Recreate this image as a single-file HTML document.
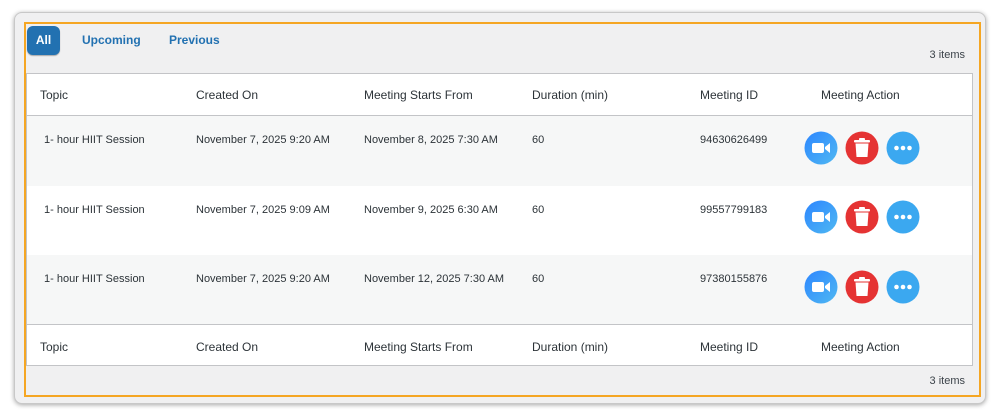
<!DOCTYPE html>
<html><head><style>
*{margin:0;padding:0;box-sizing:border-box}
body{width:1000px;height:416px;background:#fff;font-family:"Liberation Sans",Arial,sans-serif;position:relative;overflow:hidden}
.win{position:absolute;left:14px;top:12px;width:972px;height:392px;background:#f0f0f1;border:1px solid #c8c8c8;border-radius:8px;box-shadow:0 1px 5px rgba(0,0,0,.35)}
.orange{position:absolute;left:24px;top:22px;width:957px;height:375px;border:2px solid #f5a623}
.tab{position:absolute;top:33px;font-size:12px;font-weight:bold;color:#2271b1}
.all{position:absolute;left:27px;top:26px;width:33px;height:29px;background:#2271b1;border-radius:6px;color:#fff;font-weight:bold;font-size:12px;text-align:center;line-height:28px;box-shadow:0 1px 1px rgba(0,0,0,.3)}
.items{position:absolute;right:35px;font-size:11px;color:#3c434a}
.tbl{position:absolute;left:26px;top:73px;width:947px;height:293px;background:#fff;border:1px solid #c3c4c7}
.row{position:absolute;left:0;width:945px}
.t{position:absolute;font-size:11px;color:#2c3338}
.h{position:absolute;font-size:12px;color:#2c3338}
</style></head><body>
<div class="win"></div>
<div class="orange"></div>
<div class="all">All</div>
<div class="tab" style="left:82px">Upcoming</div>
<div class="tab" style="left:169px">Previous</div>
<div class="items" style="top:49px">3 items</div>
<div class="tbl">
 <div class="row" style="top:0;height:42px;border-bottom:1px solid #c3c4c7">
  <div class="h" style="left:13px;top:14px">Topic</div><div class="h" style="left:169px;top:14px">Created On</div><div class="h" style="left:337px;top:14px">Meeting Starts From</div><div class="h" style="left:505px;top:14px">Duration (min)</div><div class="h" style="left:673px;top:14px">Meeting ID</div><div class="h" style="left:794px;top:14px">Meeting Action</div>
 </div>
 <div class="row" style="top:42px;height:70px;background:#f6f7f7">
  <div class="t" style="left:17px;top:18px">1- hour HIIT Session</div><div class="t" style="left:169px;top:18px">November 7, 2025 9:20 AM</div><div class="t" style="left:337px;top:18px">November 8, 2025 7:30 AM</div><div class="t" style="left:505px;top:18px">60</div><div class="t" style="left:673px;top:18px">94630626499</div>
 </div>
 <div class="row" style="top:112px;height:69px;background:#fff">
  <div class="t" style="left:17px;top:18px">1- hour HIIT Session</div><div class="t" style="left:169px;top:18px">November 7, 2025 9:09 AM</div><div class="t" style="left:337px;top:18px">November 9, 2025 6:30 AM</div><div class="t" style="left:505px;top:18px">60</div><div class="t" style="left:673px;top:18px">99557799183</div>
 </div>
 <div class="row" style="top:181px;height:70px;background:#f6f7f7;border-bottom:1px solid #c3c4c7">
  <div class="t" style="left:17px;top:18px">1- hour HIIT Session</div><div class="t" style="left:169px;top:18px">November 7, 2025 9:20 AM</div><div class="t" style="left:337px;top:18px">November 12, 2025 7:30 AM</div><div class="t" style="left:505px;top:18px">60</div><div class="t" style="left:673px;top:18px">97380155876</div>
 </div>
 <div class="row" style="top:251px;height:41px">
  <div class="h" style="left:13px;top:15px">Topic</div><div class="h" style="left:169px;top:15px">Created On</div><div class="h" style="left:337px;top:15px">Meeting Starts From</div><div class="h" style="left:505px;top:15px">Duration (min)</div><div class="h" style="left:673px;top:15px">Meeting ID</div><div class="h" style="left:794px;top:15px">Meeting Action</div>
 </div>
</div>
<div class="items" style="top:375px">3 items</div>
<svg width="1000" height="416" style="position:absolute;left:0;top:0">
 <defs>
  <linearGradient id="g" x1="0" y1="0" x2="1" y2="1"><stop offset="0" stop-color="#2d86ff"/><stop offset="1" stop-color="#4fb8f2"/></linearGradient>
  <g id="icons">
   <circle cx="821" cy="0" r="16.5" fill="url(#g)"/>
   <rect x="812" y="-5" width="12" height="10" rx="2" fill="#fff"/>
   <path d="M825 -1 L830 -5 L830 5 L825 1 Z" fill="#fff"/>
   <circle cx="862" cy="0" r="16.5" fill="#e53333"/>
   <rect x="854" y="-8" width="16" height="2.5" rx="1" fill="#fff"/>
   <rect x="859" y="-10" width="6" height="2.5" rx="1" fill="#fff"/>
   <path d="M855.5 -4.5 H868.5 L867.5 9 H856.5 Z" fill="#fff"/>
   <circle cx="903" cy="0" r="16.5" fill="#3ba8f0"/>
   <circle cx="896.5" cy="0" r="2.3" fill="#fff"/><circle cx="903" cy="0" r="2.3" fill="#fff"/><circle cx="909.5" cy="0" r="2.3" fill="#fff"/>
  </g>
 </defs>
 <use href="#icons" y="148"/>
 <use href="#icons" y="217"/>
 <use href="#icons" y="287"/>
</svg>
</body></html>
